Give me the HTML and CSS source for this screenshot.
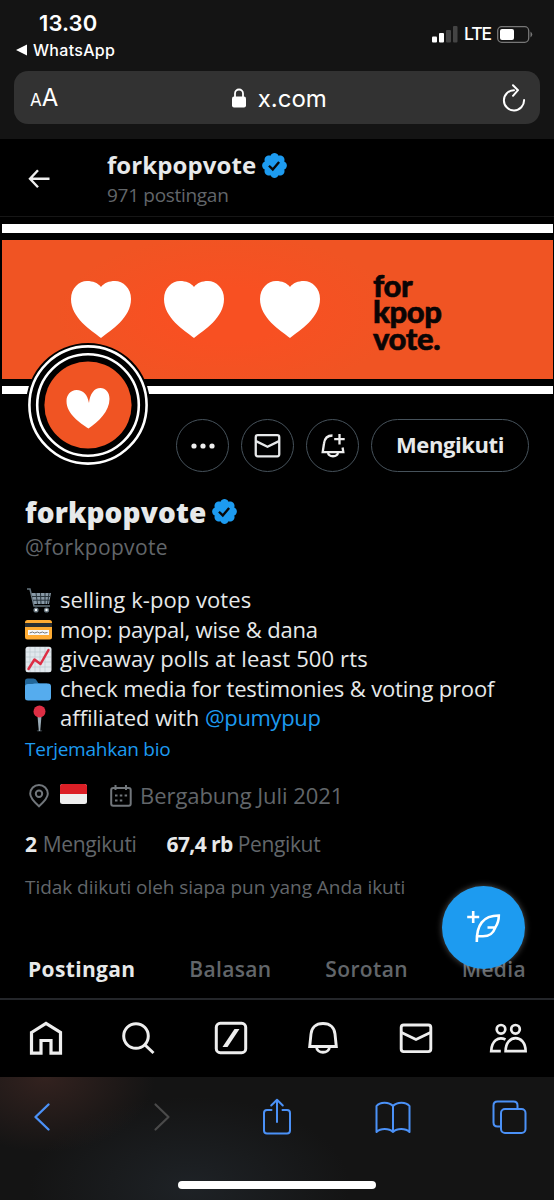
FILE: index.html
```html
<!DOCTYPE html>
<html lang="id">
<head>
<meta charset="utf-8">
<title>forkpopvote</title>
<link rel="stylesheet" href="styles.css">
</head>
<body>
<svg width="0" height="0" class="defs">
  <symbol id="verified" viewBox="0 0 22 22"><path fill="#1d9bf0" d="M20.396 11c-.018-.646-.215-1.275-.57-1.816-.354-.54-.852-.972-1.438-1.246.223-.607.27-1.264.14-1.897-.131-.634-.437-1.218-.882-1.687-.47-.445-1.053-.75-1.687-.882-.633-.13-1.29-.083-1.897.14-.273-.587-.704-1.086-1.245-1.44S11.647 1.62 11 1.604c-.646.017-1.273.213-1.813.568s-.969.854-1.24 1.44c-.608-.223-1.267-.272-1.902-.14-.635.13-1.22.436-1.69.882-.445.47-.749 1.055-.878 1.688-.13.633-.08 1.29.144 1.896-.587.274-1.087.705-1.443 1.245-.356.54-.555 1.17-.574 1.817.02.647.218 1.276.574 1.817.356.54.856.972 1.443 1.245-.224.606-.274 1.263-.144 1.896.13.634.433 1.218.877 1.688.47.443 1.054.747 1.687.878.633.132 1.29.084 1.897-.136.274.586.705 1.084 1.246 1.439.54.354 1.17.551 1.816.569.647-.016 1.276-.213 1.817-.567s.972-.854 1.245-1.44c.604.239 1.266.296 1.903.164.636-.132 1.22-.447 1.68-.907.46-.46.776-1.044.908-1.681s.075-1.299-.165-1.903c.586-.274 1.084-.705 1.439-1.246.354-.54.551-1.17.569-1.816z"/><path fill="none" stroke="#080808" stroke-width="1.8" d="M6.8 11.2 9.7 14l4.8-5.6"/></symbol>
  <symbol id="mail" viewBox="0 0 34 34"><rect x="2.2" y="4" width="29.6" height="26.6" rx="2.5" fill="none" stroke="currentColor" stroke-width="2.9"/><path d="m2.5 11.5 14.5 7 14.5-7" fill="none" stroke="currentColor" stroke-width="2.9"/></symbol>
  <symbol id="heart" viewBox="0 0 60 57"><path fill="#fff" d="M30 57C20 49 0 37 0 18 0 7 8 0 16 0c6 0 11 2 14 6 3-4 8-6 14-6 8 0 16 7 16 18 0 19-20 31-30 39z"/></symbol>
</svg>
<div class="screen">
  <header class="safari-top">
    <div class="status">
      <div class="status-left"><div class="time">13.30</div><div class="back-app"><svg width="11" height="12" viewBox="0 0 11 12"><path fill="#fff" d="M0 6 11 .5v11z"/></svg><span>WhatsApp</span></div></div>
      <div class="status-right">
        <svg width="26" height="17" viewBox="0 0 26 17"><rect y="10.5" width="5" height="6" rx="1" fill="#fff"/><rect x="7" y="7" width="5" height="9.5" rx="1" fill="#fff"/><rect x="14" y="4" width="5" height="12.5" rx="1" fill="#444"/><rect x="21" width="4.5" height="16.5" rx="1" fill="#444"/></svg>
        <span class="lte">LTE</span>
        <svg width="36" height="17" viewBox="0 0 36 17"><rect x=".7" y=".7" width="31" height="15.6" rx="4" fill="none" stroke="#777" stroke-width="1.3"/><rect x="3" y="3" width="14" height="11" rx="2" fill="#fff"/><path d="M33.5 5.5q3.500 3 0 6z" fill="#777"/></svg>
      </div>
    </div>
    <div class="urlbar">
      <div class="aa"><small>A</small>A</div>
      <div class="host"><svg width="14" height="20" viewBox="0 0 14 20"><path d="M3 9V5.500a4 4 0 0 1 8 0V9" fill="none" stroke="#fff" stroke-width="1.8"/><rect y="8.500" width="14" height="11" rx="2" fill="#fff"/></svg><span>x.com</span></div>
      <svg class="reload" width="24" height="28" viewBox="0 0 24 28"><path d="M12 6.200A10.100 10.100 0 1 0 22.100 16M11 1.200l5 5-5 5.600" fill="none" stroke="#fff" stroke-width="2" stroke-linecap="round" stroke-linejoin="round"/></svg>
    </div>
  </header>

  <div class="page-head">
    <svg class="arrow" width="22" height="20" viewBox="0 0 22 20"><path d="M10 1.200 2 9.800l8 8.500M2 9.800h19.500" fill="none" stroke="#eee" stroke-width="2.4"/></svg>
    <div class="page-title"><div class="title-row"><span class="t-name">forkpopvote</span><svg class="v1"><use href="#verified"/></svg></div><div class="t-count">971 postingan</div></div>
  </div>

  <div class="banner">
    <div class="white-bar"></div>
    <div class="orange">
      <div class="hearts"><svg class="heart"><use href="#heart"/></svg><svg class="heart"><use href="#heart"/></svg><svg class="heart"><use href="#heart"/></svg></div>
      <div class="logo"><div>for</div><div>kpop</div><div>vote.</div></div>
    </div>
    <div class="white-bar"></div>
    <svg class="avatar" width="124" height="124" viewBox="0 0 124 124"><circle cx="62" cy="62" r="62"/><circle cx="62" cy="62" r="58.6" fill="none" stroke="#fff" stroke-width="2.6"/><circle cx="62" cy="62" r="50.8" fill="none" stroke="#fff" stroke-width="2.6"/><circle cx="62" cy="62" r="43.6" fill="#f05423"/><path fill="#fff" d="M62.500 85.500C54 80 40.500 71 40.500 58c0-6 4-11 10-11 7 0 11 5 12.500 13 1-9 5-15 11.500-15 5 0 9 4 9 11 0 12-11 23-21 29.500z"/></svg>
  </div>

  <div class="actions">
    <div class="round"><svg width="24" height="6" viewBox="0 0 24 6"><g fill="#eee"><circle cx="3" cy="3" r="2.6"/><circle cx="12" cy="3" r="2.6"/><circle cx="21" cy="3" r="2.6"/></g></svg></div>
    <div class="round"><svg class="mail-sm"><use href="#mail"/></svg></div>
    <div class="round"><svg width="26" height="26" viewBox="0 0 26 26"><path d="M12.500 2.500C7 2.500 4.500 6 4 10.500L2.700 19.200h20.600l-.7-4.700M8 19.500c.5 5 9.500 5 10 0M19.500 1v10.500M14.200 6.200h10.500" fill="none" stroke="#eee" stroke-width="2.3"/></svg></div>
    <div class="follow"><span>Mengikuti</span></div>
  </div>

  <main class="profile">
    <div class="name-row"><h1>forkpopvote</h1><svg class="v2"><use href="#verified"/></svg></div>
    <div class="handle"><span>@forkpopvote</span></div>
    <ul class="bio">
      <li><svg viewBox="0 0 27 27"><path d="M2 2h3l4 17h16" fill="none" stroke="#66757f" stroke-width="1.5"/><path d="M6.500 6H26l-2 11H9z" fill="#8899a6"/><path d="M7 9.500h18.500M8 13.200h17M11 6l1.500 11M15.500 6l.5 11M20 6v11M24 6l-1.500 11" stroke="#27333b" stroke-width="1"/><circle cx="11" cy="23" r="2.6" fill="#66757f"/><circle cx="21.500" cy="23" r="2.6" fill="#66757f"/><circle cx="11" cy="23" r="1.2" fill="#fff"/><circle cx="21.500" cy="23" r="1.2" fill="#fff"/></svg><span class="b1">selling k-pop votes</span></li>
      <li><svg viewBox="0 0 27 27"><rect y="4" width="27" height="19.500" rx="2.5" fill="#ffac33"/><path fill="#292f33" d="M0 7h27v4H0z"/><path fill="#f4f7f9" d="M3 14h21v5H3z"/><path d="m4.500 17 3-1 2 1 3-1 2 1 3-1 2 1 3-.5" fill="none" stroke="#555" stroke-width=".8"/></svg><span class="b2">mop: paypal, wise &amp; dana</span></li>
      <li><svg viewBox="0 0 27 27"><rect x=".5" y=".7" width="26" height="25.6" rx="2.5" fill="#e1e8ed"/><path d="M5 1v25M10 1v25M15 1v25M20 1v25M1 6h25M1 11h25M1 16h25M1 21h25" stroke="#bdc9d0" stroke-width=".7"/><path d="m3.500 23 6-9.500 6 4.500 8-14" fill="none" stroke="#dd2e44" stroke-width="2.5" stroke-linecap="round" stroke-linejoin="round"/></svg><span class="b3">giveaway polls at least 500 rts</span></li>
      <li><svg viewBox="0 0 27 27"><path fill="#226699" d="M0 22V5q0-2.500 2.500-2.500h6Q11 2.500 12 5t3 2.500h7v12z"/><path fill="#55acee" d="M0 22V10.500Q0 8 3 8q5 0 7-.5h13q3 0 3 3v11q0 3-3 3H3q-3 0-3-2.500z"/></svg><span class="b4">check media for testimonies &amp; voting proof</span></li>
      <li><svg viewBox="0 0 27 27"><ellipse cx="14.500" cy="25.700" rx="2.8" ry="1" fill="#292f33"/><path fill="#99aab5" d="M12.500 11h4l-1.300 15h-1.400z"/><circle cx="14.500" cy="6.500" r="6" fill="#dd2e44"/></svg><span class="b5">affiliated with <a>@pumypup</a></span></li>
    </ul>
    <div class="translate"><span>Terjemahkan bio</span></div>
    <div class="meta">
      <svg class="pin" width="20" height="24" viewBox="0 0 20 24"><path d="M10 22.300C6 18.700 1.200 14.500 1.200 9.800a8.800 8.800 0 0 1 17.600 0c0 4.700-4.800 8.900-8.800 12.500z" fill="none" stroke="#71767b" stroke-width="2"/><circle cx="10" cy="9.700" r="3.2" fill="none" stroke="#71767b" stroke-width="2"/></svg>
      <svg class="flag" width="27" height="20" viewBox="0 0 27 20"><rect width="27" height="20" rx="2.5" fill="#eee"/><path fill="#dc1f26" d="M0 10V2.500Q0 0 2.500 0h22Q27 0 27 2.500V10z"/></svg>
      <svg class="cal" width="22" height="22" viewBox="0 0 22 22"><rect x="1.200" y="3" width="19.500" height="17.800" rx="2" fill="none" stroke="#71767b" stroke-width="2"/><path d="M5.500 0v5M16 0v5" stroke="#71767b" stroke-width="2"/><path d="M5 10.500h2.500m2.300 0h2.500m2.300 0h2.500M5 15.500h2.500m2.300 0h2.500" stroke="#71767b" stroke-width="2.2"/></svg>
      <span class="joined">Bergabung Juli 2021</span>
    </div>
    <div class="counts"><span class="c1"><b>2</b> Mengikuti</span><span class="c2"><b>67,4 rb</b> Pengikut</span></div>
    <div class="known"><span>Tidak diikuti oleh siapa pun yang Anda ikuti</span></div>
  </main>

  <div class="tabs"><span class="on">Postingan</span><span>Balasan</span><span>Sorotan</span><span>Media</span>
    <div class="fab"><svg width="36" height="36" viewBox="0 2 36 36"><path d="M7.200 3v12M1.200 9h12" stroke="#fff" stroke-width="2.6"/><path d="M10.800 34C10.500 17 17 7.500 32.800 7.500c0 5-.9 8-3.300 11.500-2.500 7-6 9.300-12.500 9.300h-5.500M21.500 19.500H29" fill="none" stroke="#fff" stroke-width="2.6"/></svg></div>
  </div>

  <nav class="xnav">
    <svg viewBox="0 0 38 38"><path d="M4.500 13.500 19 4.300l14.500 9.200v20.700H24V21.500H14v12.700H4.500z" fill="none" stroke="#eee" stroke-width="3.2"/></svg>
    <svg viewBox="0 0 38 38"><circle cx="17" cy="17" r="12.3" fill="none" stroke="#eee" stroke-width="3"/><path d="m25.500 25.500 9 8.500" stroke="#eee" stroke-width="3"/></svg>
    <svg viewBox="0 0 38 38"><rect x="4.300" y="4.300" width="29.400" height="29.400" rx="4" fill="none" stroke="#eee" stroke-width="3"/><path fill="#eee" d="M22.500 10h5L15.500 28h-5z"/></svg>
    <svg viewBox="0 0 38 38"><path d="M19 4.500C11.500 4.500 7.500 9 7 15L5.700 27.500h26.600L31 15C30.500 9 26.500 4.500 19 4.500zM12.500 28c.5 7 12.500 7 13 0" fill="none" stroke="#eee" stroke-width="2.9"/></svg>
    <svg class="mail-nav"><use href="#mail"/></svg>
    <svg viewBox="0 0 38 38"><g fill="none" stroke="#eee" stroke-width="2.7"><circle cx="12" cy="10.300" r="4.3"/><circle cx="26.500" cy="10.300" r="4.3"/><path d="M16.500 20.500C9 17 2.500 22 2.200 32.200h9.600M16.600 32.200c0-17.500 20-17.500 20 0z"/></g></svg>
  </nav>

  <footer class="safari-bottom">
    <div class="tools">
      <svg viewBox="0 0 38 38"><path d="M22.500 6.500 9.500 19l13 12.500" class="blue thick"/></svg>
      <svg viewBox="0 0 38 38"><path d="M13.500 6.500 26.500 19l-13 12.500" class="dim"/></svg>
      <svg viewBox="0 0 38 38"><path d="M13.500 12H9q-3 0-3 3v17.500q0 3 3 3h20q3 0 3-3V15q0-3-3-3h-4.500M19 24V2M13.200 7.500 19 1.700l5.800 5.800" class="blue"/></svg>
      <svg viewBox="0 0 38 38"><path d="M19 8C15 3.500 6 3.500 2.500 8v26c4-4 12.500-4 16.500 0 4-4 12.500-4 16.500 0V8C32 3.500 23 3.500 19 8zV34" class="blue"/></svg>
      <svg viewBox="0 0 38 38"><path d="M11 28.500H7.500q-4 0-4-4V7.500q0-4 4-4h16q4 0 4 4V11" class="blue"/><rect x="11" y="11" width="24.500" height="24" rx="4" class="blue"/></svg>
    </div>
    <div class="home-bar"></div>
  </footer>
</div>
</body>
</html>
```
FILE: styles.css
```css
* { box-sizing: border-box; }
body { margin: 0; background: #000; }
svg { display: block; flex: none; }
.defs { position: absolute; }
.screen { width: 554px; height: 1200px; overflow: hidden; background: #000; color: #e7e9ea; font-family: "Open Sans", sans-serif; white-space: nowrap; }
.screen span, .screen h1 { flex: none; }

.safari-top { height: 139px; padding: 0 14px; background: #141414; font-family: Inter, sans-serif; color: #fff; }
.status { height: 71px; display: flex; justify-content: space-between; }
.status-left { padding: 11px 0 0 2px; }
.time { font-size: 22px; line-height: 25px; font-weight: 600; padding-left: 23px; letter-spacing: .1px; }
.back-app { display: flex; align-items: center; gap: 6px; font-size: 16px; line-height: 28px; letter-spacing: .3px; font-weight: 450; }
.status-right { display: flex; align-items: center; height: 18px; margin: 25px 7px 0 0; }
.lte { font-size: 17.5px; line-height: 18px; font-weight: 500; letter-spacing: -1.1px; margin: 0 6px 0 6px; }
.urlbar { height: 53px; border-radius: 14px; background: #323232; display: flex; align-items: center; justify-content: space-between; padding: 0 13.5px 0 16px; }
.aa { font-size: 24px; width: 60px; line-height: 30px; padding-top: 2px; }
.aa small { font-size: 17px; }
.host { display: flex; align-items: center; gap: 12px; font-size: 24px; padding: 1px 0 0 2px; }
.reload { margin-left: 36px; }

.page-head { height: 78px; border-bottom: 1px solid #161616; display: flex; padding: 0 28px; }
.arrow { margin-top: 30px; }
.page-title { padding: 10px 0 0 57px; }
.title-row { display: flex; align-items: center; gap: 4px; height: 33px; }
.t-name { font-size: 24px; line-height: 31px; padding-bottom: 2px; font-weight: 700; letter-spacing: .08px; }
.v1 { width: 29px; height: 29px; }
.t-count { font-size: 19px; line-height: 26px; color: #62666a; letter-spacing: -.3px; }

.banner { position: relative; height: 178px; margin: 0 1px 0 2px; padding-top: 7px; }
.white-bar { height: 8.5px; background: #fff; }
.orange { height: 139px; margin: 7px 0; display: flex; background: radial-gradient(ellipse 190px 90px at 225px 75px, #f85022 0 30%, #f05423 90%); }
.hearts { display: flex; padding: 41px 0 0 69px; width: 371px; }
.heart { width: 60px; height: 57px; margin-right: 32.5px; }
.heart:nth-child(2) { margin-right: 36px; }
.logo { color: #0a0505; font-family: Lato, sans-serif; font-weight: 900; font-size: 31px; line-height: 26.5px; padding-top: 32px; letter-spacing: -.4px; -webkit-text-stroke: .6px #0a0505; }
.avatar { position: absolute; left: 24px; top: 126px; }

.actions { height: 77px; padding: 24px 25px 0 0; display: flex; justify-content: flex-end; gap: 12px; }
.round, .follow { height: 53px; border: 1.5px solid #46525b; border-radius: 27px; display: flex; align-items: center; justify-content: center; }
.round { width: 53px; }
.mail-sm { width: 27px; height: 27px; }
.follow { width: 158px; font-size: 22px; font-weight: 700; letter-spacing: -.4px; padding-bottom: 3px; }

.profile { height: 448px; padding-left: 25px; }
.name-row { height: 58px; padding-top: 21px; display: flex; align-items: center; gap: 4px; }
h1 { margin: 0; font-size: 28px; line-height: 38px; font-weight: 800; letter-spacing: .12px; }
.v2 { width: 29px; height: 29px; }
.handle { height: 32px; line-height: 34px; font-size: 21px; letter-spacing: .33px; color: #62666a; }
.bio { list-style: none; margin: 23px 0 0; padding: 0; }
.bio li { height: 29.6px; display: flex; align-items: center; gap: 8px; font-size: 22px; line-height: 29.6px; }
.bio svg { width: 27px; height: 27px; margin-top: 1px; }
.bio a { color: #1d9bf0; letter-spacing: -.35px; }
.b1 { letter-spacing: .06px; }
.b2 { letter-spacing: -.18px; }
.b3 { letter-spacing: .13px; }
.b4 { letter-spacing: -.17px; }
.translate { height: 32px; line-height: 33px; font-size: 19px; letter-spacing: -.25px; color: #1d9bf0; }
.meta { height: 30px; margin-top: 15px; padding-left: 4px; display: flex; align-items: center; color: #62666a; font-size: 22px; letter-spacing: -.06px; }
.pin, .cal { margin-top: 2px; }
.flag { margin: -2px 23px 0 11px; }
.joined { margin-left: 8px; padding-top: 1px; }
.counts { height: 34px; margin-top: 16px; line-height: 36px; display: flex; font-size: 21px; letter-spacing: -.35px; color: #62666a; }
.counts b { color: #e7e9ea; letter-spacing: -.45px; }
.c1 b { margin-right: 1px; }
.c2 { margin-left: 30px; }
.c2 b { letter-spacing: -.6px; }
.known { height: 30px; margin-top: 12px; line-height: 31px; font-size: 19px; letter-spacing: -.05px; color: #62666a; }

.tabs { position: relative; height: 80px; padding: 34px 28px 0; border-bottom: 2px solid #24262a; display: flex; justify-content: space-between; font-size: 21px; line-height: 30px; font-weight: 600; letter-spacing: .35px; color: #62666a; }
.tabs .on { color: #e7e9ea; font-weight: 700; }
.fab { position: absolute; left: 442px; top: -34px; width: 83px; height: 83px; border-radius: 50%; background: #1d9bf0; box-shadow: 0 0 6px rgba(255,255,255,.32); display: flex; align-items: center; justify-content: center; }

.xnav { height: 77px; padding: 0 27px 1px; display: flex; justify-content: space-between; align-items: center; color: #eee; }
.xnav svg { width: 38px; height: 38px; }
.xnav .mail-nav { padding: 2px; }

.safari-bottom { height: 123px; background: radial-gradient(ellipse 110px 75px at 45px 0, #33221f, transparent), radial-gradient(ellipse 160px 90px at 190px 110px, #1e2226, transparent), #141414; }
.tools { height: 104px; padding: 0 26px 25px 26px; display: flex; justify-content: space-between; align-items: center; }
.tools svg { width: 38px; height: 38px; }
.blue, .dim { fill: none; stroke: #4b91f7; stroke-width: 2; stroke-linecap: round; stroke-linejoin: round; }
.thick { stroke-width: 2.4; }
.dim { stroke: #4a4a4a; stroke-width: 2.2; }
.home-bar { width: 198px; height: 8px; border-radius: 4px; margin: 0 auto; background: #fff; }
```
